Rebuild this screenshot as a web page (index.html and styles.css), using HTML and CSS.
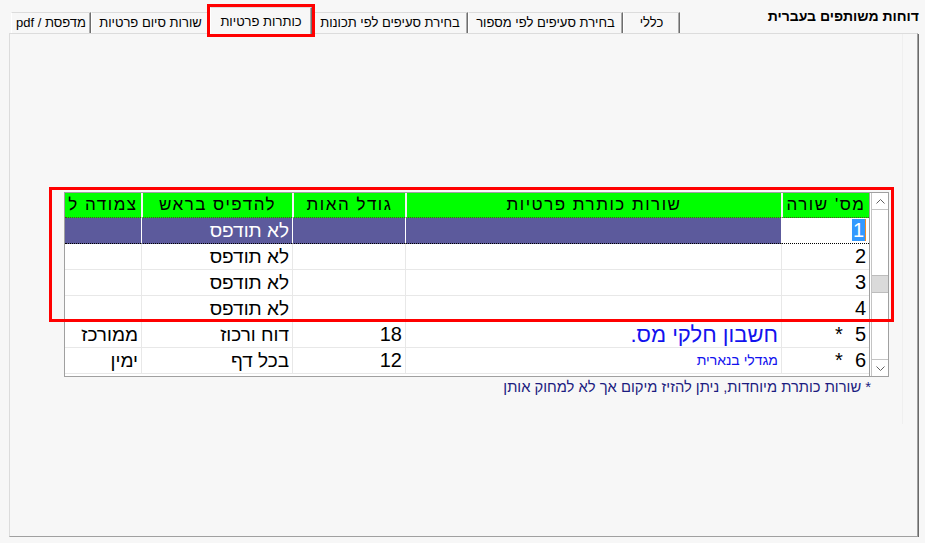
FILE: index.html
```html
<!DOCTYPE html>
<html lang="he" dir="rtl">
<head>
    <meta charset="UTF-8">
    <meta name="viewport" content="width=device-width, initial-scale=1.0">
    <title>דוחות משותפים בעברית</title>
    <link rel="stylesheet" href="styles.css">
</head>
<body>

    <div class="top-bar">
        <div class="app-title">דוחות משותפים בעברית</div>
        <div class="tab tab-general">כללי</div>
        <div class="tab tab-number">בחירת סעיפים לפי מספור</div>
        <div class="tab tab-props">בחירת סעיפים לפי תכונות</div>
        <div class="tab tab-headers active">כותרות פרטיות</div>
        <div class="tab tab-footers">שורות סיום פרטיות</div>
        <div class="tab tab-printer">מדפסת / pdf</div>
    </div>

    <div class="panel">
        <div class="frame">

            <div class="grid-wrap">
                <div class="grid">
                    <!-- scrollbar first: in rtl it lands on the right -->
                    <div class="scrollbar">
                        <div class="sb-btn">
                            <svg width="9" height="5" viewBox="0 0 9 5"><polyline points="0.5,4.5 4.5,0.5 8.5,4.5" fill="none" stroke="#606060" stroke-width="1"/></svg>
                        </div>
                        <div class="sb-track">
                            <div class="sb-thumb"></div>
                        </div>
                        <div class="sb-btn sb-down">
                            <svg width="9" height="5" viewBox="0 0 9 5"><polyline points="0.5,0.5 4.5,4.5 8.5,0.5" fill="none" stroke="#606060" stroke-width="1"/></svg>
                        </div>
                    </div>

                    <div class="rows">
                        <div class="row row-head">
                            <div class="cell">מס' שורה</div>
                            <div class="cell">שורות כותרת פרטיות</div>
                            <div class="cell">גודל האות</div>
                            <div class="cell">להדפיס בראש</div>
                            <div class="cell">צמודה ל</div>
                        </div>

                        <!-- selected row -->
                        <div class="row row-selected">
                            <div class="cell num"><span class="num-edit">1</span></div>
                            <div class="cell"></div>
                            <div class="cell"></div>
                            <div class="cell">לא תודפס</div>
                            <div class="cell"></div>
                        </div>

                        <div class="row">
                            <div class="cell num">2</div>
                            <div class="cell"></div>
                            <div class="cell"></div>
                            <div class="cell">לא תודפס</div>
                            <div class="cell"></div>
                        </div>

                        <div class="row">
                            <div class="cell num">3</div>
                            <div class="cell"></div>
                            <div class="cell"></div>
                            <div class="cell">לא תודפס</div>
                            <div class="cell"></div>
                        </div>

                        <div class="row">
                            <div class="cell num">4</div>
                            <div class="cell"></div>
                            <div class="cell"></div>
                            <div class="cell">לא תודפס</div>
                            <div class="cell"></div>
                        </div>

                        <!-- special rows (*) -->
                        <div class="row">
                            <div class="cell num">5<span class="star">*</span></div>
                            <div class="cell big-blue">חשבון חלקי מס.</div>
                            <div class="cell num">18</div>
                            <div class="cell">דוח ורכוז</div>
                            <div class="cell">ממורכז</div>
                        </div>

                        <div class="row">
                            <div class="cell num">6<span class="star">*</span></div>
                            <div class="cell small-blue">מגדלי בנארית</div>
                            <div class="cell num">12</div>
                            <div class="cell">בכל דף</div>
                            <div class="cell">ימין</div>
                        </div>
                    </div>
                </div>

                <div class="mark-box"></div>
            </div>

            <div class="note">* שורות כותרת מיוחדות, ניתן להזיז מיקום אך לא למחוק אותן</div>

        </div>
    </div>

</body>
</html>
```

FILE: styles.css
```css
body {
    font-family: "Liberation Sans", Arial, sans-serif;
    background-color: #f7f7f7;
    color: #000;
    margin: 0;
    direction: rtl;
}
.top-bar {
    display: flex;
    align-items: flex-end;
    height: 33px;
}
.app-title {
    align-self: flex-start;
    width: 245px;
    box-sizing: border-box;
    padding-top: 8px;
    padding-right: 6px;
    font-size: 14px;
    font-weight: bold;
    line-height: 16px;
}
.tab {
    box-sizing: border-box;
    height: 21px;
    border-top: 1px solid #dcdcdc;
    border-left: 1px solid #ffffff;
    border-right: 1px solid #6e6e6e;
    box-shadow: inset -1px 0 #a9a9a9;
    background-color: #f7f7f7;
    font-size: 13px;
    line-height: 19px;
    text-align: center;
    white-space: nowrap;
}
.tab-general { width: 57px; }
.tab-number { width: 155px; }
.tab-props { width: 156px; }
.tab-headers { width: 102px; }
.tab-footers { width: 119px; }
.tab-printer { width: 80px; }
.tab.active {
    height: 27px;
    margin-bottom: -1px;
    padding-top: 4px;
    position: relative;
    z-index: 1;
    outline: 3px solid #ff0000;
}
.panel {
    box-sizing: border-box;
    margin-right: 7px;
    width: 909px;
    height: 504px;
    border-top: 1px solid #dcdcdc;
    border-left: 1px solid #dcdcdc;
    border-right: 1px solid #a0a0a0;
    border-bottom: 1px solid #a0a0a0;
    box-shadow: 1px 1px 0 #6a6a6a;
}
.frame {
    box-sizing: border-box;
    height: 390px;
    margin-right: 14px;
    border-right: 1px solid #efefef;
    padding-top: 158px;
}
.grid-wrap {
    position: relative;
    width: 825px;
    margin-right: 13px;
}
.grid {
    display: flex;
    height: 183px;
    border: 1px solid #a0a0a0;
    background-color: #fff;
}
.scrollbar {
    width: 17px;
    display: flex;
    flex-direction: column;
    border-left: 1px solid #c4c4c4;
    box-sizing: border-box;
}
.sb-btn {
    height: 17px;
    box-sizing: border-box;
    border-bottom: 1px solid #c4c4c4;
    display: flex;
    justify-content: center;
    align-items: center;
}
.sb-down {
    border-bottom: none;
    border-top: 1px solid #c4c4c4;
}
.sb-track {
    flex: 1;
}
.sb-thumb {
    margin-top: 65px;
    height: 18px;
    box-sizing: border-box;
    background-color: #dadada;
    border-top: 1px solid #bdbdbd;
    border-bottom: 1px solid #bdbdbd;
}
.rows {
    width: 805px;
    margin-right: 1px;
    box-sizing: border-box;
    border-right: 1px solid #a0a0a0;
}
.row {
    display: grid;
    grid-template-columns: 88px 376px 113px 151px 76px;
    height: 26px;
}
.cell {
    box-sizing: border-box;
    border-left: 1px solid #e8e8e8;
    border-bottom: 1px solid #e8e8e8;
    padding: 0 3px;
    font-size: 19px;
    line-height: 25px;
    text-align: right;
    white-space: nowrap;
    overflow: hidden;
}
.cell:last-child {
    border-left: none;
}
.row-head {
    height: 25px;
}
.row-head .cell {
    background-color: #00ff00;
    border-left: 2px solid #f2f2f2;
    border-bottom: 1px dotted #4d4a20;
    padding: 0;
    font-size: 17px;
    letter-spacing: 1.5px;
    line-height: 24px;
    text-align: center;
}
.row-head .cell:last-child {
    border-left: none;
}
.row-selected .cell {
    background-color: #5c5a9c;
    color: #fff;
    border-left: 1px solid #fff;
    border-bottom: 1px dotted #000;
}
.row-selected .cell.num {
    background-color: #fff;
}
.row-selected .cell:last-child {
    border-left: none;
}
.num {
    font-size: 20px;
}
.num-edit {
    background-color: #3399ff;
    color: #fff;
    padding: 0 1px;
    border-right: 1px solid #f08a24;
}
.star {
    margin-right: 12px;
}
.big-blue {
    color: #1212ee;
    font-size: 22px;
}
.small-blue {
    color: #1212ee;
    font-size: 14px;
}
.mark-box {
    position: absolute;
    top: -5px;
    left: -15px;
    right: -5px;
    height: 135px;
    box-sizing: border-box;
    border: 3px solid #ff0000;
}
.note {
    margin-top: 2px;
    padding-right: 31px;
    font-size: 14.75px;
    line-height: 16px;
    color: #1c1c80;
}
```
